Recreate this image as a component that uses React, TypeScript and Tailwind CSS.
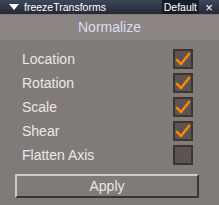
import React from 'react';

const items = [
  { label: 'Location', checked: true },
  { label: 'Rotation', checked: true },
  { label: 'Scale', checked: true },
  { label: 'Shear', checked: true },
  { label: 'Flatten Axis', checked: false },
];

function Check({ checked }: { checked: boolean }) {
  return (
    <div className="w-[20px] h-[20px] border-2 border-[#3b3534] bg-[#5c5453] flex items-center justify-center">
      {checked && (
        <svg width="16" height="14" viewBox="0 0 16 14">
          <path d="M2 8 L6 12 L14 2" fill="none" stroke="#ff8c00" strokeWidth="2.4" strokeLinecap="square" />
        </svg>
      )}
    </div>
  );
}

export default function App() {
  return (
    <div className="w-[219px] h-[205px] bg-[#807a78] flex flex-col overflow-hidden" style={{ fontFamily: '"Liberation Sans", Arial, sans-serif' }}>
      <div className="h-[14px] bg-gradient-to-b from-[#3e4659] to-[#232938] flex items-center text-white text-[10.5px] leading-none">
        <svg width="10" height="6" viewBox="0 0 10 6" className="ml-[9px] mr-[5px]">
          <path d="M0 0 H10 L5 6 Z" fill="#ffffff" />
        </svg>
        <span className="flex-1">freezeTransforms</span>
        <span className="bg-[#161b28] h-full px-[2px] flex items-center">Default</span>
        <span className="w-[20px] text-center text-[13px] font-light">×</span>
      </div>
      <div className="mt-[1px] h-[25px] bg-[#8c8583] flex items-center justify-center text-[14px] text-[#dcdcf2]">
        Normalize
      </div>
      <div className="flex flex-col gap-[5px] pt-[9px] pl-[22px] pr-[26px]">
        {items.map((it) => (
          <div key={it.label} className="h-[19px] flex items-center justify-between">
            <span className="text-[14px] text-[#ece8e4] leading-none">{it.label}</span>
            <Check checked={it.checked} />
          </div>
        ))}
      </div>
      <div className="mt-[10px] ml-[15px] w-[184px] h-[24px] border-2 border-t-[#cfcac6] border-l-[#cfcac6] border-b-[#3a3534] border-r-[#3a3534] flex items-center justify-center text-[14px] text-[#ece8e4]">
        Apply
      </div>
    </div>
  );
}
